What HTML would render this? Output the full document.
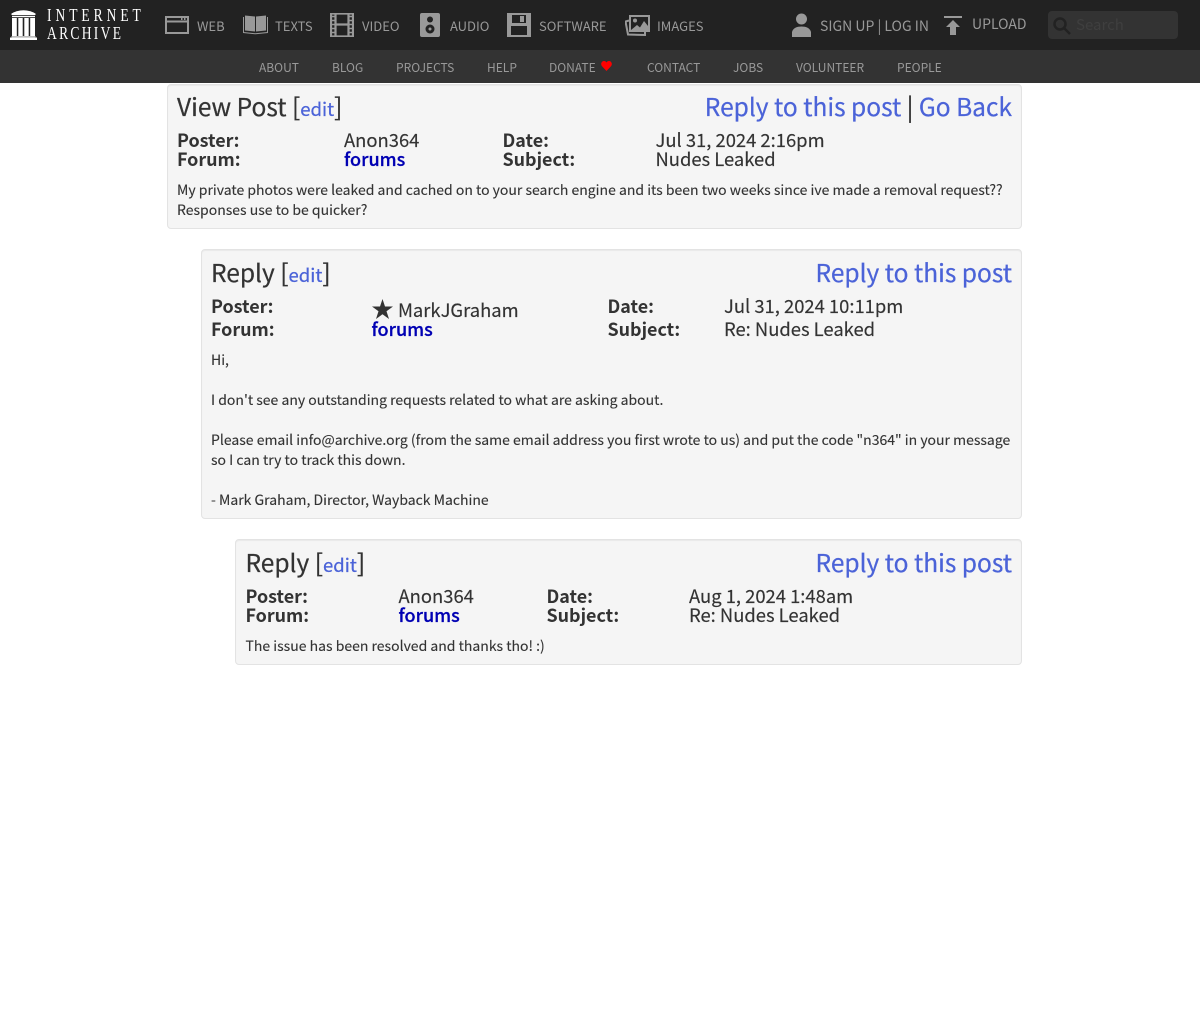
<!DOCTYPE html>
<html lang="en"><head><meta charset="utf-8"><title>View Post</title>
<style>
html,body{margin:0;padding:0;background:#fff;width:1200px;height:1020px;overflow:hidden}
body{position:relative;font-family:"Noto Sans CJK SC","Liberation Sans",sans-serif;color:#333}
.t{position:absolute;white-space:nowrap;line-height:20px}
svg{position:absolute;display:block}
#top{position:absolute;left:0;top:0;width:1200px;height:50px;background:#222}
#sub{position:absolute;left:0;top:50px;width:1200px;height:33px;background:#333}
.n{font-size:13px;color:#999}
.s{font-size:12px;color:#999;top:58px}
.box{position:absolute;background:#f5f5f5;border:1px solid #e3e3e3;border-radius:4px;box-sizing:border-box;box-shadow:inset 0 1px 1px rgba(0,0,0,.05)}
.h{font-size:24.5px;line-height:30px;color:#333;-webkit-text-stroke:.25px #333}
.h a{font-size:18.5px;color:#4b63d8;text-decoration:none;-webkit-text-stroke:.25px #4b63d8}
.r{font-size:24.5px;line-height:30px;color:#4b63d8;-webkit-text-stroke:.25px #4b63d8}
.r i{font-style:normal;color:#333;-webkit-text-stroke:.25px #333}
.l{font-size:17.9px;font-weight:700;color:#333}
.v{font-size:18.4px;color:#333;-webkit-text-stroke:.15px #333}
.f{font-size:18px;color:#0000b3;font-weight:500;-webkit-text-stroke:.25px #0000b3}
.b{font-size:14px;color:#333;-webkit-text-stroke:.12px #333}
</style></head><body>
<div id="top"></div><div id="sub"></div>

<svg style="left:10px;top:10px" width="27" height="30" viewBox="0 0 27 30" fill="#fff"><path d="M1.500 3.500Q7 .5 13.500 .3 20 .5 25.500 3.500V5H1.500z"/><rect x="2" y="5.800" width="23" height="1.400"/><rect x="2" y="8" width="4.800" height="18"/><rect x="8.300" y="8" width="4.400" height="18"/><rect x="14.300" y="8" width="4.400" height="18"/><rect x="20.200" y="8" width="4.800" height="18"/><rect x="1.500" y="26.300" width="24" height="1"/><rect x="0" y="27.500" width="27" height="2.500"/></svg>
<div class="t" style="left:47px;top:5px;font:18px/20px 'Liberation Serif',serif;letter-spacing:5.300px;color:#fff;transform:scaleX(.75);transform-origin:0 0">INTERNET</div>
<div class="t" style="left:47px;top:23px;font:18px/20px 'Liberation Serif',serif;letter-spacing:3.100px;color:#fff;transform:scaleX(.75);transform-origin:0 0">ARCHIVE</div>

<svg style="left:165px;top:16px" width="24" height="18" fill="none" stroke="#999" stroke-width="2"><rect x="1" y="1" width="22" height="16"/><path d="M1 5.500H23"/><path d="M16 3h1.500M19 3h1.500" stroke-width="2"/></svg>
<div class="t n" style="left:197px;top:16px">WEB</div>
<svg style="left:243px;top:15px" width="25" height="20" fill="#999"><path d="M2 .5 12 1.500V16.500L2 15.500zM13 1.500 23 .5V15.500L13 16.500z"/><path d="M.5 2V17.500L12.500 18.800 24.500 17.500V2" fill="none" stroke="#999"/></svg>
<div class="t n" style="left:275px;top:16px">TEXTS</div>
<svg style="left:330px;top:13px" width="24" height="24" fill="none" stroke="#999"><path d="M1 .5H23V23.500H1zM5.500 .5V23.500M18.500 .5V23.500M5 11.500H19" stroke-width="2.200"/><path d="M1 3.500H5M1 7.500H5M1 11.500H5M1 15.500H5M1 19.500H5M19 3.500H23M19 7.500H23M19 11.500H23M19 15.500H23M19 19.500H23" stroke-width="1.500"/></svg>
<div class="t n" style="left:362px;top:16px">VIDEO</div>
<svg style="left:420px;top:13px" width="20" height="24"><rect width="20" height="24" rx="2" fill="#999"/><circle cx="10" cy="6.500" r="3" fill="#222"/><circle cx="10" cy="16" r="4.500" fill="#222"/><circle cx="10" cy="16" r="1.500" fill="#999"/></svg>
<div class="t n" style="left:450px;top:16px">AUDIO</div>
<svg style="left:507px;top:13px" width="24" height="24"><rect width="24" height="24" fill="#999"/><rect x="5" y="2" width="14" height="8" fill="#222"/><rect x="13" y="3" width="4" height="6" fill="#999"/><rect x="4" y="13" width="16" height="9" fill="#222"/></svg>
<div class="t n" style="left:539px;top:16px">SOFTWARE</div>
<svg style="left:625px;top:15px" width="25" height="21" fill="none" stroke="#999"><path d="M4 5.500.5 6.500 3 19.500 20 20V17" stroke-width="2"/><rect x="5" y="1" width="19" height="15" stroke-width="2"/><circle cx="10" cy="5.500" r="2" fill="#999" stroke="none"/><path d="M6 15 12 10 15 12.500 19 6 23 11V15z" fill="#999" stroke="none"/></svg>
<div class="t n" style="left:657px;top:16px">IMAGES</div>

<svg style="left:792px;top:13px" width="19" height="24" fill="#999"><circle cx="9.500" cy="6" r="5.500"/><path d="M0 24V19C1 15 5 13.500 9.500 13.500S18 15 19 19V24z"/></svg>
<div class="t" style="left:820px;top:16px;font-size:14px;color:#999">SIGN UP | LOG IN</div>
<svg style="left:944px;top:16px" width="19" height="19" fill="#999"><rect width="18" height="2"/><path d="M9 4 16 11H12V19H6V11H2z"/></svg>
<div class="t" style="left:972px;top:14px;font-size:14px;color:#999">UPLOAD</div>
<div style="position:absolute;left:1048px;top:11px;width:130px;height:28px;background:#333;border-radius:4px"></div>
<svg style="left:1052px;top:16px" width="20" height="20" fill="none" stroke="#222" stroke-width="2.500"><circle cx="8" cy="8" r="5.500"/><path d="M12 12 18 18"/></svg>
<div class="t" style="left:1076px;top:15px;font-size:15px;color:#3f3f3f">Search</div>

<div class="t s" style="left:259px">ABOUT</div>
<div class="t s" style="left:332px">BLOG</div>
<div class="t s" style="left:396px">PROJECTS</div>
<div class="t s" style="left:487px">HELP</div>
<div class="t s" style="left:549px">DONATE</div>
<svg style="left:601px;top:61px" width="11" height="10" fill="#f00"><path d="M5.500 10 .8 5C-.8 2.500 1 0 3 0 4.200 0 5 .6 5.500 1.500 6 .6 6.800 0 8 0 10 0 11.800 2.500 10.200 5z"/></svg>
<div class="t s" style="left:647px">CONTACT</div>
<div class="t s" style="left:733px">JOBS</div>
<div class="t s" style="left:796px">VOLUNTEER</div>
<div class="t s" style="left:897px">PEOPLE</div>

<div class="box" style="left:167px;top:84px;width:855px;height:145px"></div>
<div class="t h" style="left:177px;top:92px">View Post [<a>edit</a>]</div>
<div class="t r" style="right:188px;top:92px">Reply to this post <i>|</i> Go Back</div>
<div class="t l" style="left:177px;top:130px">Poster:</div>
<div class="t v" style="left:344px;top:130px">Anon364</div>
<div class="t l" style="left:502.500px;top:130px">Date:</div>
<div class="t v" style="left:655.500px;top:130px">Jul 31, 2024 2:16pm</div>
<div class="t l" style="left:177px;top:149px">Forum:</div>
<div class="t f" style="left:344px;top:149px">forums</div>
<div class="t l" style="left:502.500px;top:149px">Subject:</div>
<div class="t v" style="left:655.500px;top:149px">Nudes Leaked</div>
<div class="t b" style="left:177px;top:180px">My private photos were leaked and cached on to your search engine and its been two weeks since ive made a removal request??</div>
<div class="t b" style="left:177px;top:200px">Responses use to be quicker?</div>

<div class="box" style="left:201px;top:249px;width:821px;height:270px"></div>
<div class="t h" style="left:211px;top:258px">Reply [<a>edit</a>]</div>
<div class="t r" style="right:188px;top:258px">Reply to this post</div>
<div class="t l" style="left:211px;top:296px">Poster:</div>
<svg style="left:372px;top:299px" width="21" height="20" fill="#333"><path d="M10.500 0 13 7.500H21L14.500 12.200 17 20 10.500 15.200 4 20 6.500 12.200 0 7.500H8z"/></svg>
<div class="t v" style="left:398px;top:300px">MarkJGraham</div>
<div class="t l" style="left:607.500px;top:296px">Date:</div>
<div class="t v" style="left:724px;top:296px">Jul 31, 2024 10:11pm</div>
<div class="t l" style="left:211px;top:319px">Forum:</div>
<div class="t f" style="left:371.500px;top:319px">forums</div>
<div class="t l" style="left:607.500px;top:319px">Subject:</div>
<div class="t v" style="left:724px;top:319px">Re: Nudes Leaked</div>
<div class="t b" style="left:211px;top:350px">Hi,</div>
<div class="t b" style="left:211px;top:390px">I don't see any outstanding requests related to what are asking about.</div>
<div class="t b" style="left:211px;top:430px">Please email info@archive.org (from the same email address you first wrote to us) and put the code "n364" in your message</div>
<div class="t b" style="left:211px;top:450px">so I can try to track this down.</div>
<div class="t b" style="left:211px;top:490px">- Mark Graham, Director, Wayback Machine</div>

<div class="box" style="left:235px;top:539px;width:787px;height:126px"></div>
<div class="t h" style="left:245.500px;top:548px">Reply [<a>edit</a>]</div>
<div class="t r" style="right:188px;top:548px">Reply to this post</div>
<div class="t l" style="left:245.500px;top:586px">Poster:</div>
<div class="t v" style="left:398.500px;top:586px">Anon364</div>
<div class="t l" style="left:546.500px;top:586px">Date:</div>
<div class="t v" style="left:689px;top:586px">Aug 1, 2024 1:48am</div>
<div class="t l" style="left:245.500px;top:605px">Forum:</div>
<div class="t f" style="left:398.500px;top:605px">forums</div>
<div class="t l" style="left:546.500px;top:605px">Subject:</div>
<div class="t v" style="left:689px;top:605px">Re: Nudes Leaked</div>
<div class="t b" style="left:245.500px;top:636px">The issue has been resolved and thanks tho! :)</div>
</body></html>
